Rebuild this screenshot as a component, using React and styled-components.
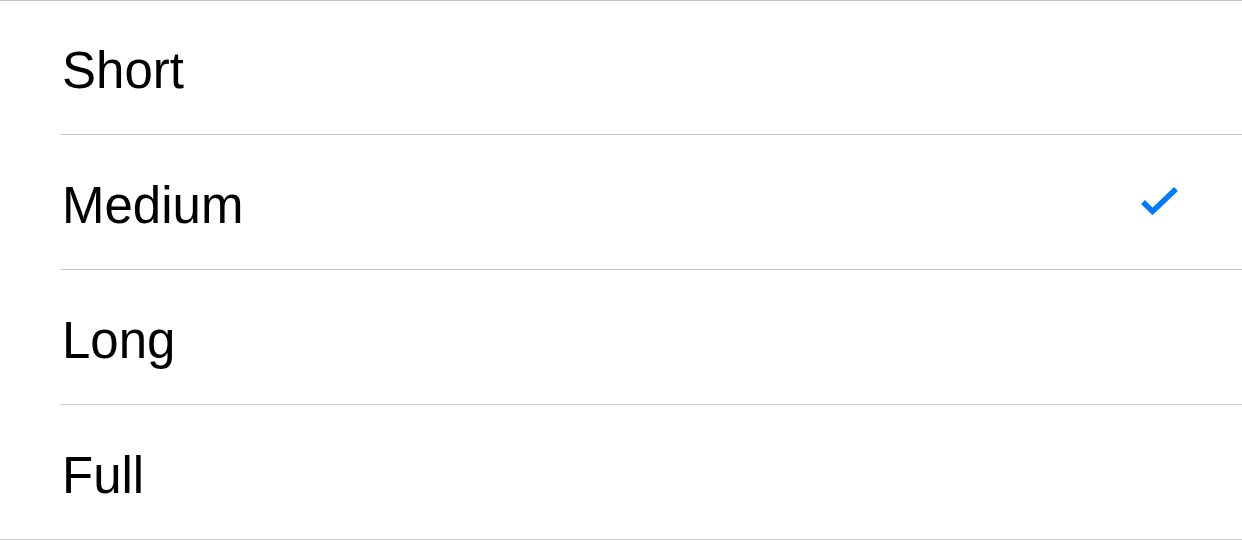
import styled, { createGlobalStyle } from "styled-components";

const GlobalStyle = createGlobalStyle`
  html, body {
    margin: 0;
    padding: 0;
    background: #ffffff;
  }
`;

const List = styled.ul`
  list-style: none;
  margin: 0;
  padding: 0;
  width: 1242px;
  border-top: 1px solid #c8c7cc;
  border-bottom: 1px solid #c8c7cc;
  background: #ffffff;
  font-family: "Liberation Sans", Arial, sans-serif;
`;

const Row = styled.li`
  padding-left: 60px;
`;

const RowInner = styled.div`
  height: ${(props) => (props.first ? "133px" : "134px")};
  display: flex;
  align-items: center;
  justify-content: space-between;
  padding-left: 2px;
  padding-right: 62px;
  border-bottom: ${(props) => (props.last ? "none" : "1px solid #c8c7cc")};
`;

const Label = styled.span`
  font-size: 51px;
  color: #000000;
  line-height: 1;
  padding-top: 6px;
`;

const Check = () => (
  <svg width="40" height="32" viewBox="0 0 40 32">
    <path
      d="M3 16 L12.5 25.5 L36 3"
      fill="none"
      stroke="#007aff"
      strokeWidth="5.5"
    />
  </svg>
);

const options = ["Short", "Medium", "Long", "Full"];

const App = () => {
  const selected = "Medium";
  return (
    <>
      <GlobalStyle />
      <List>
        {options.map((opt, i) => (
          <Row key={opt}>
            <RowInner first={i === 0} last={i === options.length - 1}>
              <Label>{opt}</Label>
              {opt === selected && <Check />}
            </RowInner>
          </Row>
        ))}
      </List>
    </>
  );
};

export default App;
